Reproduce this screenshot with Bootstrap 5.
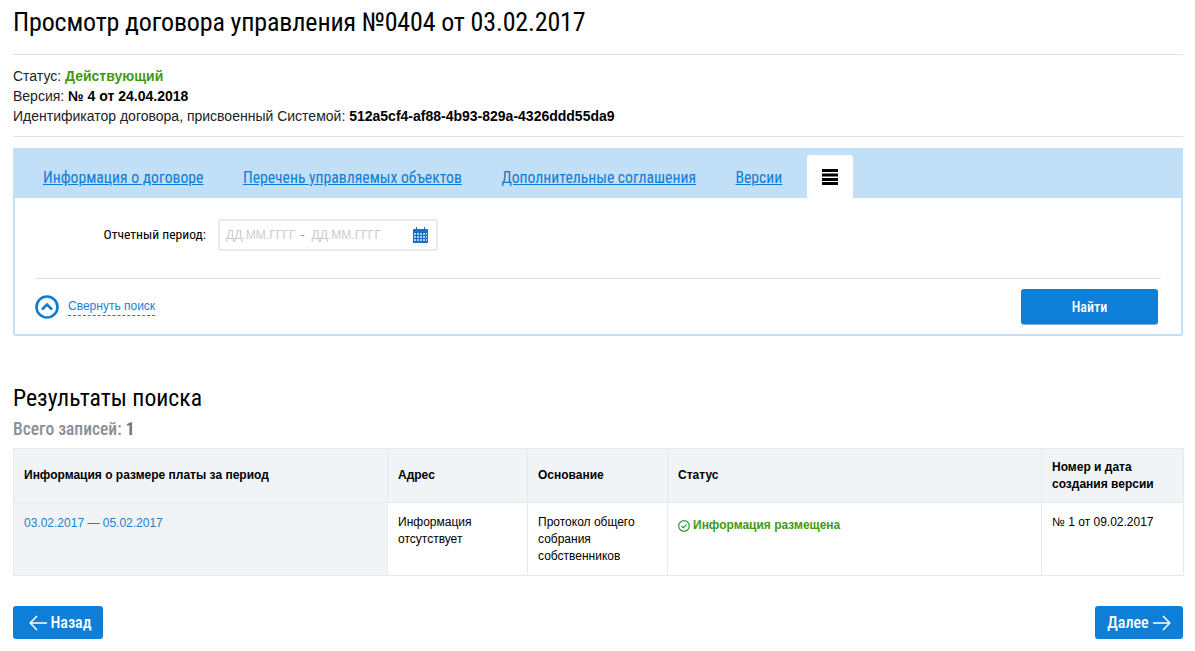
<!DOCTYPE html>
<html lang="ru"><head><meta charset="utf-8"><title>Договор</title>
<link href="https://cdn.jsdelivr.net/npm/bootstrap@5.3.0/dist/css/bootstrap.min.css" rel="stylesheet">
<style>
html,body{height:651px;overflow:hidden}
body{background:#fff;color:#000;font-family:"Liberation Sans",Arial,sans-serif;font-size:13px;padding:0 12px 0 13px}
.cnd{font-family:Roboto,"Liberation Sans",sans-serif;font-stretch:condensed}
.ttl{font-size:26px;font-weight:400;line-height:30px;margin:0;height:54px;padding-top:7px;letter-spacing:-.15px}
.rule{height:1px;background:#dfe1e4}
.meta{height:81px;padding-top:11px;line-height:20px;font-size:14px;color:#222}
.meta b{color:#000}
.meta .ok{color:#3f9a12}
.panel{margin-top:11px;border:2px solid #c1dff7;border-top:0;border-radius:3px;height:188px}
.tabsbar{background:#c1dff7;height:50px;margin:0 -2px;padding:7px 0 0 10px;gap:0;align-items:stretch}
.tabsbar a{font-size:15.7px;color:#0d7cd6;text-decoration:underline;padding:11px 19.5px 0 20px;white-space:nowrap}
.tabsbar .on{background:#fff;width:46px;margin-left:5px;border-radius:3px 3px 0 0;padding:0;display:flex;justify-content:center;padding-top:14px}
.flt{height:80px;padding:21px 0 0 0}
.flt label{width:203px;text-align:right;font-size:13.6px;line-height:30px;padding-right:12px}
.dt{width:220px;height:32px;border:2px solid #e7ebef;border-radius:3px;padding:0 6px;font-size:12.1px;color:#c9ccd0;line-height:28px}
.dt svg{margin-right:2px}
.sep{color:#888;margin:0 7px 0 5px}
.low{margin:0 20px;border-top:1px solid #e0e0e0;height:56px;padding:10px 3px 0 0}
.low .tg{padding-top:6px;gap:9px}
.tog{font-size:12px;color:#1b82d3;border-bottom:1px dashed #0d7cd6;line-height:14px;padding-bottom:2px;text-decoration:none}
.bbtn{background:#0d7fd8;color:#fff;border:0;border-radius:3px;font-size:15px;display:flex;align-items:center;justify-content:center;text-decoration:none}
.find{width:137px;height:35px;font-size:14px;font-weight:500;box-shadow:0 1px 0 #8aa9c4;padding-top:1px}
.res{font-size:23.7px;font-weight:400;margin:48px 0 0;line-height:28px}
.tot{font-size:17.5px;color:#8b8f94;font-weight:500;line-height:20px;margin:7px 0 9px}
.tot b{color:#6d7277}
.tbl{width:1170px;table-layout:fixed;border-collapse:collapse;font-size:12px;line-height:17px;margin:0}
.tbl th,.tbl td{border:1px solid #e6eaee;padding:11px 10px 10px;vertical-align:top}
.tbl th{background:#f0f4f7;vertical-align:middle;height:54px;padding:8px 10px;font-weight:700;color:#000;line-height:17px}
.tbl td{height:73px}
.tbl td.ft{background:#f0f4f7;padding-top:12px}
.tbl td.ft a{color:#1b7fcb;text-decoration:none}
.tbl td.st{padding-top:14px}
.grn{color:#3f9a12;font-weight:700;margin-left:3px}
.navs{margin-top:30px}
.nv{height:33px;font-size:16px;font-weight:500;gap:3px}
.nv.bk{width:90px;padding-left:5px}
.nv.fw{width:88px;gap:4px}
</style></head><body>
<h1 class="ttl cnd">Просмотр договора управления №0404 от 03.02.2017</h1>
<div class="rule"></div>
<div class="meta">Статус: <b class="ok">Действующий</b><br>Версия: <b>№ 4 от 24.04.2018</b><br>Идентификатор договора, присвоенный Системой: <b>512a5cf4-af88-4b93-829a-4326ddd55da9</b></div>
<div class="rule"></div>
<section class="panel">
<nav class="tabsbar d-flex">
<a href="#" class="cnd">Информация о договоре</a><a href="#" class="cnd">Перечень управляемых объектов</a><a href="#" class="cnd">Дополнительные соглашения</a><a href="#" class="cnd">Версии</a>
<a href="#" class="on" aria-label="Меню"><svg width="16" height="16" viewBox="0 0 16 16"><path d="M0 0h16v3H0zM0 4.5h16v3H0zM0 9h16v3H0zM0 13h16v3H0z" fill="#000"/></svg></a>
</nav>
<div class="flt d-flex">
<label class="cnd">Отчетный период:</label>
<div class="dt d-flex align-items-center"><span>ДД.ММ.ГГГГ</span><span class="sep">-</span><span>ДД.ММ.ГГГГ</span>
<svg class="ms-auto" width="15" height="16" viewBox="0 0 15 16"><path d="M0 2h3V0h1v2h7V0h1v2h3v14H0z" fill="#1b6fc9"/><path d="M1 6h2v2H1zM4 6h2v2H4zM7 6h2v2H7zM10 6h2v2h-2zM13 6h1v2h-1zM1 9h2v2H1zM4 9h2v2H4zM7 9h2v2H7zM10 9h2v2h-2zM13 9h1v2h-1zM1 12h2v2H1zM4 12h2v2H4zM7 12h2v2H7zM10 12h2v2h-2zM13 12h1v2h-1z" fill="#a9cdf0"/></svg></div>
</div>
<div class="low d-flex justify-content-between align-items-start">
<div class="tg d-flex align-items-center"><svg width="24" height="24" viewBox="0 0 24 24" fill="none" stroke="#0d7cd6"><circle cx="12" cy="12" r="10.5" stroke-width="2.6"/><path d="M7 14.5l5-5 5 5" stroke-width="2.6"/></svg><a href="#" class="tog">Свернуть поиск</a></div>
<a href="#" class="bbtn find cnd">Найти</a>
</div>
</section>
<h2 class="res cnd">Результаты поиска</h2>
<div class="tot cnd">Всего записей: <b>1</b></div>
<table class="tbl">
<colgroup><col style="width:374px"><col style="width:140px"><col style="width:140px"><col style="width:374px"><col style="width:142px"></colgroup>
<thead><tr><th>Информация о размере платы за период</th><th>Адрес</th><th>Основание</th><th>Статус</th><th>Номер и дата создания версии</th></tr></thead>
<tbody><tr><td class="ft"><a href="#">03.02.2017 — 05.02.2017</a></td><td>Информация отсутствует</td><td>Протокол общего собрания собственников</td>
<td class="st"><svg width="12" height="12" viewBox="0 0 12 12" fill="none" stroke="#2f9a3a" stroke-width="1.2"><circle cx="6" cy="6" r="5.3"/><path d="M3.5 6l1.8 1.8 3.2-3.2"/></svg><span class="grn">Информация размещена</span></td>
<td>№ 1 от 09.02.2017</td></tr></tbody></table>
<div class="navs d-flex justify-content-between">
<a href="#" class="bbtn nv bk cnd"><svg width="18" height="16" viewBox="0 0 18 16" fill="none" stroke="#fff" stroke-width="1.5"><path d="M8 1L1.2 8 8 15M1.2 8H18"/></svg>Назад</a>
<a href="#" class="bbtn nv fw cnd">Далее<svg width="18" height="16" viewBox="0 0 18 16" fill="none" stroke="#fff" stroke-width="1.5"><path d="M10 1l6.8 7L10 15M16.8 8H0"/></svg></a>
</div>
</body></html>
